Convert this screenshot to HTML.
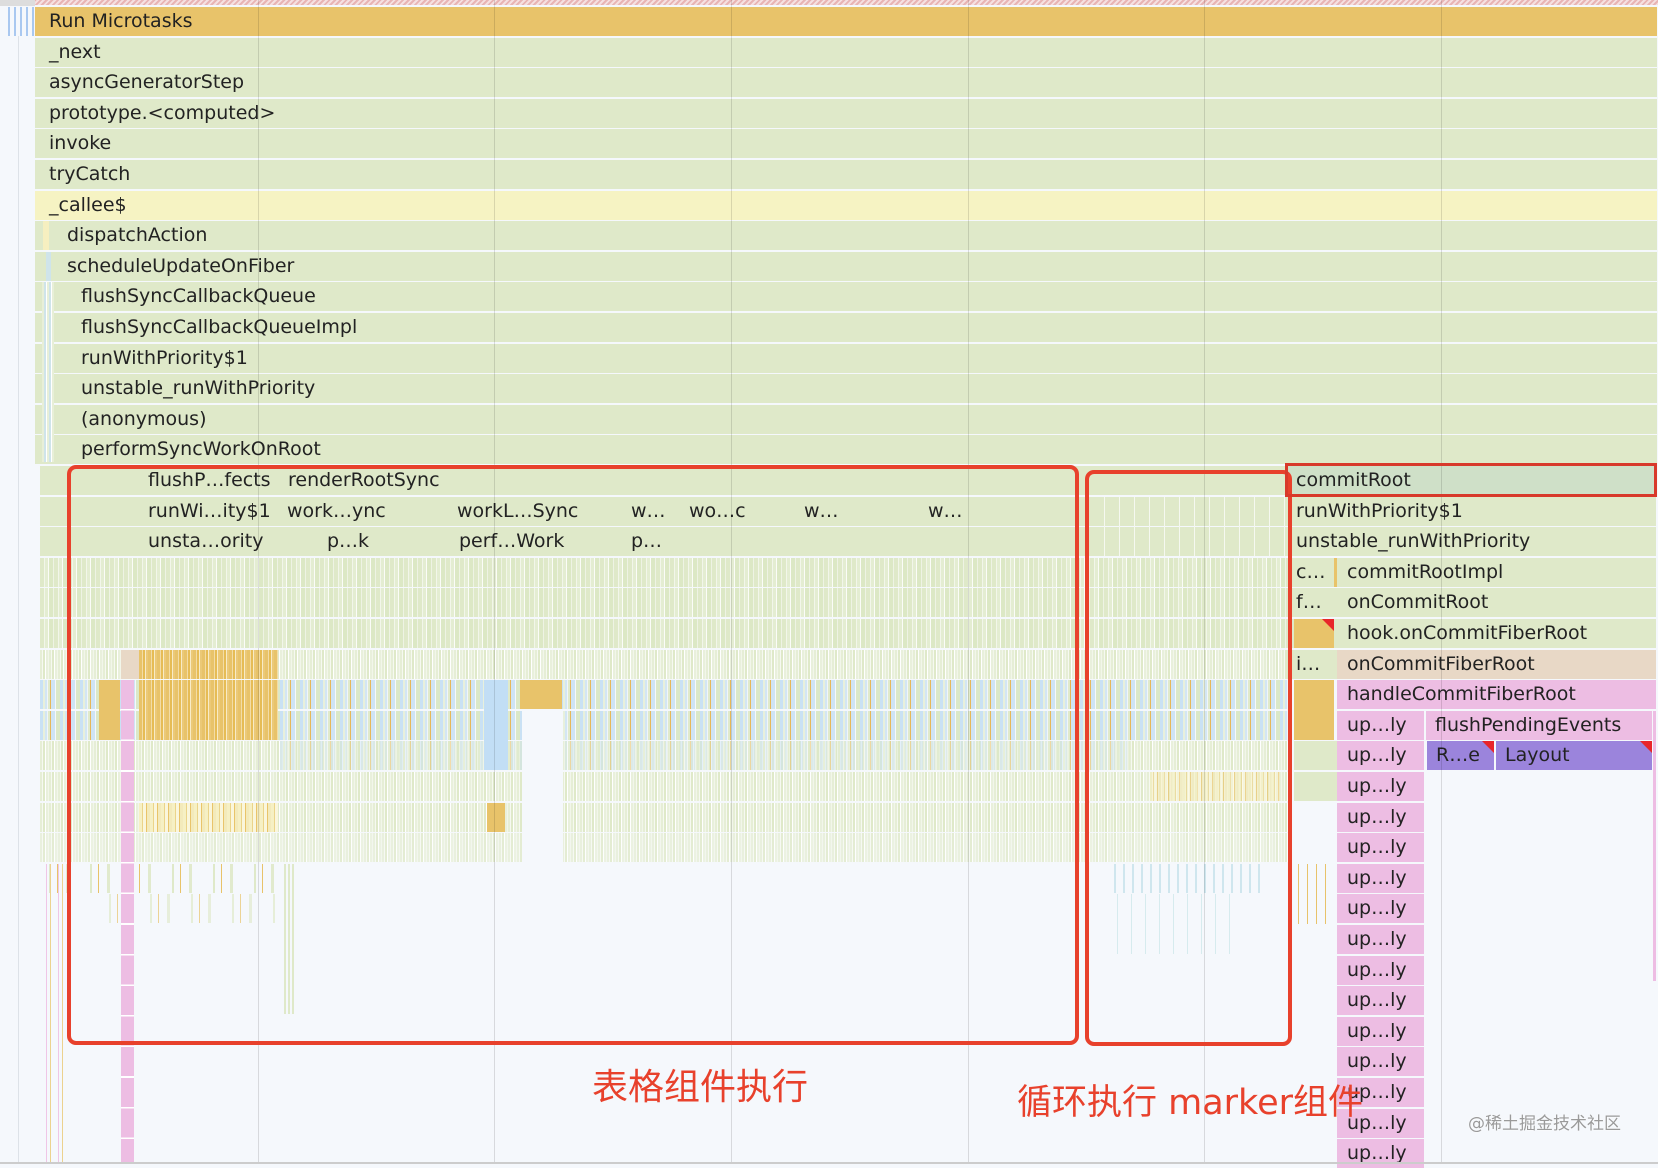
<!DOCTYPE html>
<html><head><meta charset="utf-8"><style>
body{margin:0;width:1658px;height:1164px;overflow:hidden;background:#f5f8fc;position:relative;font-family:"DejaVu Sans","Noto Sans CJK SC",sans-serif}
div{position:absolute;box-sizing:border-box}
.b{height:29px;background:#dfe9c9;color:#222;font-size:19px;line-height:29px;white-space:nowrap;overflow:hidden}
.t{position:absolute;top:0}
.g{background:repeating-linear-gradient(90deg,#dfe9c9 0 4px,#f2f6ea 4px 5px,#e4edd2 5px 8px,#fbfcf8 8px 9px,#dce8c5 9px 13px,#eef3e4 13px 14px)}
.gs{background:repeating-linear-gradient(90deg,#e6eed6 0 2px,#f6f9f1 2px 3px,#dfe9c9 3px 5px,#fff 5px 6px,#e9f0dc 6px 8px,#f2f6ea 8px 9px)}
.bl{background:repeating-linear-gradient(90deg,#c9e1f4 0 3px,#e8f0dc 3px 5px,#d3e6f3 5px 7px,#f0f5fa 7px 8px,#e0eacb 8px 10px,#e6b75a 10px 11px,#cfe4f5 11px 15px,#f5f8fc 15px 16px,#dbe8c8 16px 20px)}
.or{background:repeating-linear-gradient(90deg,#e8c36a 0 3px,#f3dca6 3px 4px,#e6bc55 4px 6px,#f8ebc6 6px 7px,#ebc978 7px 9px)}
.yl{background:repeating-linear-gradient(90deg,#f6f0c4 0 3px,#ebd48a 3px 4px,#faf6dc 4px 7px,#e9c46a 7px 8px,#f3eabb 8px 11px)}
.sp{background:repeating-linear-gradient(90deg,transparent 0 9px,#dfe9c9 9px 11px,transparent 11px 17px,#e8c36a 17px 18px,transparent 18px 26px,#e1eacd 26px 29px,transparent 29px 41px)}
.pk{background:#edbde3}
.vl{top:0;width:1px;height:1164px;background:rgba(0,0,0,.12)}
.rb{border:4px solid #e8412c;border-radius:9px}
.tri{width:0;height:0;border-top:12px solid #e8262a;border-left:12px solid transparent;top:0;right:0}
</style></head><body>
<div style="left:0;top:0;width:1658px;height:5px;background:repeating-linear-gradient(135deg,#e8b4b4 0 2px,#f5e0e0 2px 4px)"></div>
<div style="left:0;top:0;width:35px;height:6px;background:#ddd"></div>
<div style="left:8px;top:7px;width:27px;height:29px;background:repeating-linear-gradient(90deg,#a9c8f0 0 2px,#f5f8fc 2px 6px)"></div>
<div style="left:18px;top:36px;width:1px;height:1128px;background:#dde2e8"></div>

<div class="b" style="left:35px;top:7px;width:1622px;background:#e8c36a"><span class="t" style="left:14px">Run Microtasks</span></div>
<div class="b" style="left:35px;top:38px;width:1622px"><span class="t" style="left:14px">_next</span></div>
<div class="b" style="left:35px;top:68px;width:1622px"><span class="t" style="left:14px">asyncGeneratorStep</span></div>
<div class="b" style="left:35px;top:99px;width:1622px"><span class="t" style="left:14px">prototype.&lt;computed&gt;</span></div>
<div class="b" style="left:35px;top:129px;width:1622px"><span class="t" style="left:14px">invoke</span></div>
<div class="b" style="left:35px;top:160px;width:1622px"><span class="t" style="left:14px">tryCatch</span></div>
<div class="b" style="left:35px;top:191px;width:1622px;background:#f6f3c3"><span class="t" style="left:14px">_callee$</span></div>
<div class="b" style="left:35px;top:221px;width:1622px"><span class="t" style="left:32px">dispatchAction</span></div>
<div style="left:43px;top:221px;width:6px;height:29px;background:#f6efc0"></div>
<div class="b" style="left:35px;top:252px;width:1622px"><span class="t" style="left:32px">scheduleUpdateOnFiber</span></div>
<div style="left:46px;top:252px;width:5px;height:29px;background:#cfe4ea"></div>
<div class="b" style="left:35px;top:282px;width:1622px"><span class="t" style="left:46px">flushSyncCallbackQueue</span></div>
<div class="b" style="left:35px;top:313px;width:1622px"><span class="t" style="left:46px">flushSyncCallbackQueueImpl</span></div>
<div class="b" style="left:35px;top:344px;width:1622px"><span class="t" style="left:46px">runWithPriority$1</span></div>
<div class="b" style="left:35px;top:374px;width:1622px"><span class="t" style="left:46px">unstable_runWithPriority</span></div>
<div class="b" style="left:35px;top:405px;width:1622px"><span class="t" style="left:46px">(anonymous)</span></div>
<div class="b" style="left:35px;top:435px;width:1622px"><span class="t" style="left:46px">performSyncWorkOnRoot</span></div>
<div style="left:42px;top:282px;width:12px;height:180px;background:repeating-linear-gradient(90deg,#e8efd8 0 2px,#cfe4ea 2px 4px,#fff 4px 5px)"></div>

<div class="b" style="left:40px;top:466px;width:1246px"><span class="t" style="left:108px">flushP…fects</span><span class="t" style="left:248px">renderRootSync</span></div>
<div class="b" style="left:1286px;top:466px;width:370px;background:#cfe0c8"><span class="t" style="left:10px">commitRoot</span></div>
<div class="b" style="left:40px;top:497px;width:1616px"><span class="t" style="left:108px">runWi…ity$1</span><span class="t" style="left:247px">work…ync</span><span class="t" style="left:417px">workL…Sync</span><span class="t" style="left:591px">w…</span><span class="t" style="left:649px">wo…c</span><span class="t" style="left:764px">w…</span><span class="t" style="left:888px">w…</span><span class="t" style="left:1256px">runWithPriority$1</span></div>
<div class="b" style="left:40px;top:527px;width:1616px"><span class="t" style="left:108px">unsta…ority</span><span class="t" style="left:287px">p…k</span><span class="t" style="left:419px">perf…Work</span><span class="t" style="left:591px">p…</span><span class="t" style="left:1256px">unstable_runWithPriority</span></div>
<div style="left:1090px;top:497px;width:196px;height:59px;background:repeating-linear-gradient(90deg,transparent 0 14px,#f5f8f0 14px 15px)"></div>

<div class="g" style="left:40px;top:558px;width:1250px;height:29px"></div>
<div class="g" style="left:40px;top:588px;width:1250px;height:29px"></div>
<div class="g" style="left:40px;top:619px;width:1250px;height:29px"></div>
<div class="gs" style="left:40px;top:650px;width:1250px;height:29px"></div>
<div class="or" style="left:139px;top:650px;width:139px;height:29px"></div>
<div style="left:121px;top:650px;width:18px;height:29px;background:#e8d8c6"></div>
<div class="bl" style="left:40px;top:680px;width:1250px;height:29px"></div>
<div class="bl" style="left:40px;top:711px;width:1250px;height:29px"></div>
<div class="gs" style="left:40px;top:741px;width:1250px;height:29px"></div>
<div class="bl" style="left:280px;top:741px;width:850px;height:29px;opacity:.5"></div>
<div class="gs" style="left:40px;top:772px;width:1250px;height:29px"></div>
<div class="gs" style="left:40px;top:803px;width:1250px;height:29px"></div>
<div class="gs" style="left:40px;top:833px;width:1250px;height:29px;opacity:.8"></div>
<div class="or" style="left:139px;top:680px;width:139px;height:60px"></div>
<div style="left:99px;top:680px;width:21px;height:60px;background:#e8c36a"></div>
<div class="yl" style="left:139px;top:803px;width:139px;height:29px"></div>
<div class="yl" style="left:1150px;top:772px;width:130px;height:29px;opacity:.7"></div>
<div style="left:484px;top:680px;width:24px;height:90px;background:#c2def5"></div>
<div style="left:487px;top:803px;width:18px;height:29px;background:#e8c36a"></div>
<div style="left:520px;top:680px;width:42px;height:29px;background:#e8c36a"></div>
<div style="left:522px;top:711px;width:41px;height:453px;background:#f5f8fc"></div>
<div style="left:1290px;top:558px;width:46px;height:300px;background:#f5f8fc"></div>

<div class="sp" style="left:40px;top:864px;width:250px;height:29px"></div>
<div class="sp" style="left:100px;top:894px;width:180px;height:29px;opacity:.7"></div>
<div class="sp" style="left:1110px;top:864px;width:150px;height:29px;background:repeating-linear-gradient(90deg,transparent 0 4px,#cfe6ee 4px 6px,transparent 6px 9px)"></div>
<div class="sp" style="left:1110px;top:894px;width:120px;height:60px;background:repeating-linear-gradient(90deg,transparent 0 7px,#d6ebee 7px 8px,transparent 8px 14px)"></div>
<div style="left:284px;top:864px;width:10px;height:150px;background:repeating-linear-gradient(90deg,#dfe9c9 0 2px,transparent 2px 4px)"></div>
<div style="left:44px;top:864px;width:24px;height:300px;background:repeating-linear-gradient(90deg,transparent 0 2px,#efc6e6 2px 3px,transparent 3px 6px,#ecd28e 6px 7px,transparent 7px 12px)"></div>
<div class="pk" style="left:121px;top:680px;width:13px;height:484px;background:repeating-linear-gradient(180deg,#edbde3 0 29px,#fff 29px 30.6px)"></div>

<div class="b" style="left:1286px;top:558px;width:370px"><span class="t" style="left:10px">c…</span><span class="t" style="left:61px">commitRootImpl</span></div>
<div style="left:1334px;top:558px;width:3px;height:29px;background:#e8c36a"></div>
<div class="b" style="left:1286px;top:588px;width:370px"><span class="t" style="left:10px">f…</span><span class="t" style="left:61px">onCommitRoot</span></div>
<div class="b" style="left:1286px;top:619px;width:370px"><span class="t" style="left:61px">hook.onCommitFiberRoot</span></div>
<div style="left:1294px;top:619px;width:40px;height:29px;background:#e8c36a"><div class="tri"></div></div>
<div class="b" style="left:1286px;top:650px;width:51px"><span class="t" style="left:10px">i…</span></div>
<div class="b" style="left:1337px;top:650px;width:319px;background:#e8d8c6"><span class="t" style="left:10px">onCommitFiberRoot</span></div>
<div style="left:1294px;top:680px;width:40px;height:60px;background:#e8c36a"></div>
<div class="b" style="left:1294px;top:741px;width:43px"></div>
<div class="b" style="left:1294px;top:772px;width:43px"></div>
<div class="b pk" style="left:1337px;top:680px;width:319px"><span class="t" style="left:10px">handleCommitFiberRoot</span></div>
<div class="b pk" style="left:1426px;top:711px;width:226px"><span class="t" style="left:9px">flushPendingEvents</span></div>
<div class="b" style="left:1427px;top:741px;width:67px;background:#9b84dc"><span class="t" style="left:9px">R…e</span><div class="tri"></div></div>
<div class="b" style="left:1496px;top:741px;width:156px;background:#9b84dc"><span class="t" style="left:9px">Layout</span><div class="tri"></div></div>
<div style="left:1653px;top:711px;width:3px;height:270px;background:#edbde3"></div>
<div class="b pk" style="left:1337px;top:711px;width:87px"><span class="t" style="left:10px">up…ly</span></div>
<div class="b pk" style="left:1337px;top:741px;width:87px"><span class="t" style="left:10px">up…ly</span></div>
<div class="b pk" style="left:1337px;top:772px;width:87px"><span class="t" style="left:10px">up…ly</span></div>
<div class="b pk" style="left:1337px;top:803px;width:87px"><span class="t" style="left:10px">up…ly</span></div>
<div class="b pk" style="left:1337px;top:833px;width:87px"><span class="t" style="left:10px">up…ly</span></div>
<div class="b pk" style="left:1337px;top:864px;width:87px"><span class="t" style="left:10px">up…ly</span></div>
<div class="b pk" style="left:1337px;top:894px;width:87px"><span class="t" style="left:10px">up…ly</span></div>
<div class="b pk" style="left:1337px;top:925px;width:87px"><span class="t" style="left:10px">up…ly</span></div>
<div class="b pk" style="left:1337px;top:956px;width:87px"><span class="t" style="left:10px">up…ly</span></div>
<div class="b pk" style="left:1337px;top:986px;width:87px"><span class="t" style="left:10px">up…ly</span></div>
<div class="b pk" style="left:1337px;top:1017px;width:87px"><span class="t" style="left:10px">up…ly</span></div>
<div class="b pk" style="left:1337px;top:1047px;width:87px"><span class="t" style="left:10px">up…ly</span></div>
<div class="b pk" style="left:1337px;top:1078px;width:87px"><span class="t" style="left:10px">up…ly</span></div>
<div class="b pk" style="left:1337px;top:1109px;width:87px"><span class="t" style="left:10px">up…ly</span></div>
<div class="b pk" style="left:1337px;top:1139px;width:87px"><span class="t" style="left:10px">up…ly</span></div>
<div style="left:1294px;top:864px;width:40px;height:60px;background:repeating-linear-gradient(90deg,transparent 0 4px,#e8c36a 4px 5px,transparent 5px 9px)"></div>

<div class="vl" style="left:258px"></div>
<div class="vl" style="left:494px"></div>
<div class="vl" style="left:731px"></div>
<div class="vl" style="left:968px"></div>
<div class="vl" style="left:1204px"></div>
<div class="vl" style="left:1441px"></div>
<div style="left:0;top:1162px;width:1658px;height:2px;background:#ccc"></div>

<div class="rb" style="left:67px;top:465px;width:1012px;height:580px"></div>
<div class="rb" style="left:1085px;top:470px;width:207px;height:576px"></div>
<div style="left:1285px;top:463px;width:372px;height:34px;border:3px solid #d8392b"></div>
<div style="left:592px;top:1066px;font-size:36px;color:#e8412c;white-space:nowrap;line-height:44px">表格组件执行</div>
<div style="left:1017px;top:1081px;font-size:35px;color:#e8412c;white-space:nowrap;line-height:44px">循环执行 marker组件</div>
<div style="left:1468px;top:1112px;font-size:17px;color:#9a9a9a;white-space:nowrap;line-height:24px;text-shadow:0 0 2px #fff">@稀土掘金技术社区</div>
</body></html>
